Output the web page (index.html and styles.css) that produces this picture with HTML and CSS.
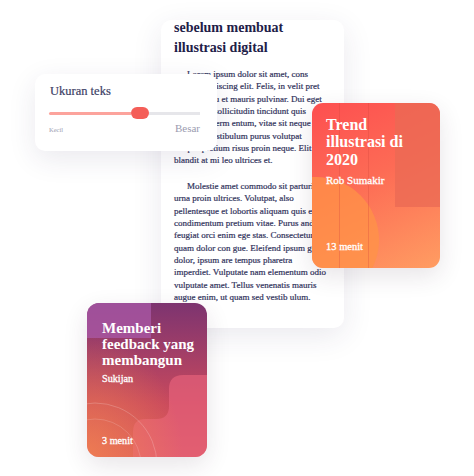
FILE: index.html
```html
<!DOCTYPE html>
<html>
<head>
  <meta charset="UTF-8">
  <title>Ukuran teks</title>
  <link rel="stylesheet" href="styles.css">
</head>
<body>
  <div class="stage">

    <!-- artikel -->
    <div class="article">
      <h1>sebelum membuat<br>illustrasi digital</h1>
      <p class="para">Lorem ipsum dolor sit amet, cons<br>ectetur adipiscing elit. Felis, in velit pret<br>Egestas arcu et mauris pulvinar. Dui eget<br>Morbi nisl sollicitudin tincidunt quis<br>Lacinia ut ferm entum, vitae sit neque<br>Tortor ut vestibulum purus volutpat<br>tempor pretium risus proin neque. Elit<br>blandit at mi leo ultrices et.</p>
      <p class="para">Molestie amet commodo sit parturient<br>urna proin ultrices. Volutpat, also<br>pellentesque et lobortis aliquam quis et<br>condimentum pretium vitae. Purus and<br>feugiat orci enim ege stas. Consectetur<br>quam dolor con gue. Eleifend ipsum gravida<br>dolor, ipsum are tempus pharetra<br>imperdiet. Vulputate nam elementum odio<br>vulputate amet. Tellus venenatis mauris<br>augue enim, ut quam sed vestib ulum.</p>
    </div>

    <!-- pengaturan ukuran teks -->
    <div class="size-card">
      <div class="size-title">Ukuran teks</div>
      <div class="slider">
        <span class="fill"></span>
        <span class="thumb"></span>
        <span class="rest"></span>
      </div>
      <div class="labels">
        <span class="small">Kecil</span>
        <span class="big">Besar</span>
      </div>
    </div>

    <!-- kartu oranye -->
    <div class="story orange">
      <svg class="decor" viewBox="0 0 128 165" preserveAspectRatio="none">
        <rect x="83" y="0" width="45" height="104" fill="#e96a54" opacity="0.75"/>
        <circle cx="4" cy="137" r="63" fill="#ff9347" opacity="0.75"/>
        <line x1="27.5" y1="0" x2="27.5" y2="165" stroke="#d4463c" stroke-opacity="0.3"/>
        <line x1="56.5" y1="0" x2="56.5" y2="165" stroke="#d4463c" stroke-opacity="0.3"/>
      </svg>
      <h2>Trend<br>illustrasi di<br>2020</h2>
      <div class="author">Rob Sumakir</div>
      <div class="time">13 menit</div>
    </div>

    <!-- kartu ungu -->
    <div class="story purple">
      <svg class="decor" viewBox="0 0 120 154" preserveAspectRatio="none">
        <defs>
          <radialGradient id="warm" cx="0" cy="1" r="0.8">
            <stop offset="0" stop-color="#f4874f" stop-opacity="0.75"/>
            <stop offset="1" stop-color="#f4874f" stop-opacity="0"/>
          </radialGradient>
        </defs>
        <rect x="0" y="0" width="64" height="35" fill="#a95aa8" opacity="0.75"/>
        <path d="M120,72 L96,72 Q82,72 82,86 L82,103 Q82,116 69,116 L58,116 Q46,116 46,129 L46,154 L120,154 Z" fill="#e5617a" opacity="0.7"/>
        <rect x="0" y="0" width="120" height="154" fill="url(#warm)"/>
        <circle cx="8" cy="162" r="62" fill="none" stroke="#fff" stroke-opacity="0.2"/>
        <circle cx="8" cy="162" r="46" fill="none" stroke="#fff" stroke-opacity="0.16"/>
      </svg>
      <h2>Memberi<br>feedback yang<br>membangun</h2>
      <div class="author">Sukijan</div>
      <div class="time">3 menit</div>
    </div>

  </div>
</body>
</html>
```

FILE: styles.css
```css
body {
  margin: 0;
  background: #fff;
  font-family: "Liberation Serif", "DejaVu Serif", serif;
}
.stage {
  position: relative;
  width: 474px;
  height: 476px;
  overflow: hidden;
}

/* artikel */
.article {
  position: absolute;
  left: 161px;
  top: 20px;
  width: 183px;
  height: 308px;
  box-sizing: border-box;
  padding: 0 13px;
  background: #fff;
  border-radius: 10px;
  box-shadow: 0 8px 30px rgba(50, 40, 90, 0.1);
  overflow: hidden;
  color: #2f315a;
}
.article h1 {
  margin: -2.5px 0 0;
  font-size: 14px;
  line-height: 20px;
  font-weight: bold;
  color: #1e2048;
  white-space: nowrap;
}
.para {
  margin: 10.5px 0 0;
  font-size: 9px;
  line-height: 12.35px;
  text-indent: 13px;
  white-space: nowrap;
  -webkit-text-stroke: 0.2px #2f315a;
}
.para + .para {
  margin-top: 13.2px;
}

/* ukuran teks */
.size-card {
  position: absolute;
  left: 35px;
  top: 74px;
  width: 182px;
  height: 77px;
  box-sizing: border-box;
  padding: 10px 17px 0 14px;
  background: #fff;
  border-radius: 10px;
  box-shadow: 0 8px 28px rgba(50, 40, 90, 0.1);
  z-index: 2;
}
.size-title {
  font-size: 12.5px;
  line-height: 14px;
  color: #3c3e65;
  padding-left: 1px;
  -webkit-text-stroke: 0.2px #3c3e65;
}
.slider {
  display: flex;
  align-items: center;
  height: 12px;
  margin-top: 9px;
}
.fill {
  width: 82px;
  height: 3px;
  background: #fca39c;
  border-radius: 2px 0 0 2px;
}
.thumb {
  width: 18px;
  height: 12px;
  border-radius: 6px;
  background: #f45e58;
}
.rest {
  flex: 1;
  height: 3px;
  background: #e6e6ea;
}
.labels {
  display: flex;
  justify-content: space-between;
  align-items: baseline;
  margin-top: 3.3px;
  color: #9a9bb0;
  line-height: 12px;
}
.small {
  font-size: 6.5px;
}
.big {
  font-size: 11px;
}

/* kartu cerita */
.story {
  position: absolute;
  display: flex;
  flex-direction: column;
  box-sizing: border-box;
  overflow: hidden;
  color: #fff;
  z-index: 2;
  box-shadow: 0 8px 24px rgba(60, 30, 60, 0.12);
}
.story .decor {
  position: absolute;
  left: 0;
  top: 0;
  width: 100%;
  height: 100%;
}
.story h2,
.story .author,
.story .time {
  position: relative;
  margin: 0;
  white-space: nowrap;
}
.story h2 {
  font-weight: bold;
}
.story .author,
.story .time {
  -webkit-text-stroke: 0.3px #fff;
}
.story .author {
  line-height: 13px;
}
.story .time {
  margin-top: auto;
  line-height: 12px;
}

.orange {
  left: 312px;
  top: 103px;
  width: 128px;
  height: 165px;
  padding: 12.8px 8px 15.5px 14px;
  border-radius: 11px;
  background: linear-gradient(155deg, #fd4f50 0%, #fd6b55 45%, #ff9d62 100%);
}
.orange h2 {
  font-size: 16px;
  line-height: 17.5px;
}
.orange .author {
  margin-top: 5.5px;
  font-size: 11px;
}
.orange .time {
  font-size: 10.5px;
}

.purple {
  left: 87px;
  top: 303px;
  width: 120px;
  height: 154px;
  padding: 16.8px 6px 10.4px 15px;
  border-radius: 12px;
  background: linear-gradient(180deg, #7d3470 0%, #a53f66 35%, #c9495d 65%, #dc5a5c 100%);
}
.purple h2 {
  font-size: 15px;
  line-height: 16.3px;
}
.purple .author {
  margin-top: 3.3px;
  font-size: 10.2px;
}
.purple .time {
  font-size: 10.2px;
}
```
